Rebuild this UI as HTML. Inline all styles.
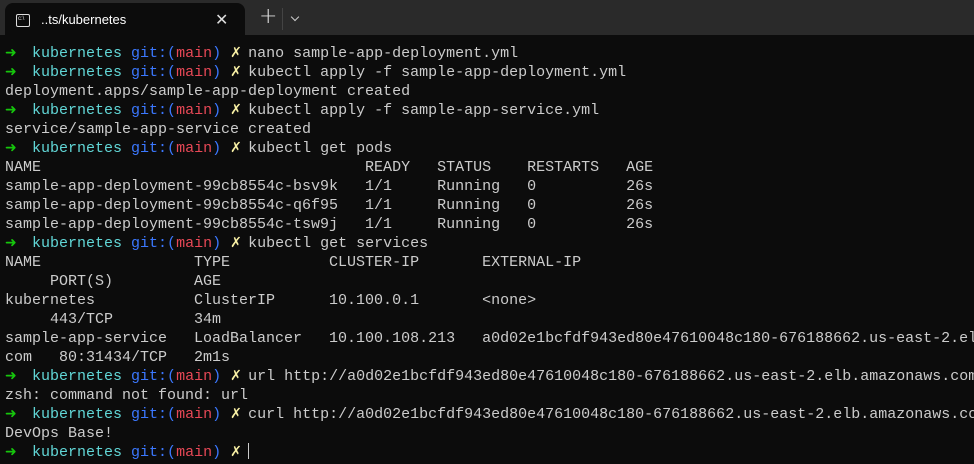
<!DOCTYPE html>
<html><head><meta charset="utf-8"><style>
html,body{margin:0;padding:0;width:974px;height:464px;overflow:hidden;background:#0c0c0c;}
.bar{position:absolute;left:0;top:0;width:974px;height:35px;background:#2a2a2a;}
.tab{position:absolute;left:5px;top:3px;width:240px;height:32px;background:#0c0c0c;border-radius:8px 8px 0 0;}
.tab .t{position:absolute;left:36px;top:9px;font:13px "Liberation Sans",sans-serif;color:#fff;}
.ico{position:absolute;left:11px;top:11px;width:12px;height:11px;border:1.5px solid #ddd;border-radius:2px;}
.ico:after{content:"c:\\";position:absolute;left:1px;top:1px;font:6px "Liberation Sans",sans-serif;color:#ddd;}
.x{position:absolute;left:210px;top:7px;font:16px "DejaVu Sans",sans-serif;color:#ddd;}
.plus{position:absolute;left:259px;top:4px;font:22px "DejaVu Sans",sans-serif;font-weight:200;color:#ddd;}
.sep{position:absolute;left:282px;top:8px;width:1px;height:22px;background:#444;}
.chev{position:absolute;left:292px;top:14px;width:5px;height:5px;border-right:1.5px solid #ccc;border-bottom:1.5px solid #ccc;transform:rotate(45deg);}
pre{position:absolute;left:5px;top:44px;margin:0;font:15px/19px "Liberation Mono","DejaVu Sans Mono",monospace;color:#cccccc;white-space:pre;width:969px;overflow:hidden;}
.g,.y{display:inline-block;width:9px;overflow:visible;line-height:10px;font-family:"DejaVu Sans",sans-serif;}
.g{color:#16c60c;font-weight:bold;font-size:14px;}
.c{color:#61d6d6}.b{color:#3b78ff}.r{color:#e74856}
.y{color:#f9f1a5;font-size:14px}
.cur{display:inline-block;width:1px;height:16px;background:#ccc;vertical-align:-3px;}
</style></head><body>
<div class="bar"><div class="tab"><div class="ico"></div><div class="t">..ts/kubernetes</div><div class="x">✕</div></div>
<div class="plus">+</div><div class="sep"></div><div class="chev"></div></div>
<pre><span class="g">➜</span>  <span class="c">kubernetes</span> <span class="b">git:(</span><span class="r">main</span><span class="b">)</span> <span class="y">✗</span> nano sample-app-deployment.yml
<span class="g">➜</span>  <span class="c">kubernetes</span> <span class="b">git:(</span><span class="r">main</span><span class="b">)</span> <span class="y">✗</span> kubectl apply -f sample-app-deployment.yml
deployment.apps/sample-app-deployment created
<span class="g">➜</span>  <span class="c">kubernetes</span> <span class="b">git:(</span><span class="r">main</span><span class="b">)</span> <span class="y">✗</span> kubectl apply -f sample-app-service.yml
service/sample-app-service created
<span class="g">➜</span>  <span class="c">kubernetes</span> <span class="b">git:(</span><span class="r">main</span><span class="b">)</span> <span class="y">✗</span> kubectl get pods
NAME                                    READY   STATUS    RESTARTS   AGE
sample-app-deployment-99cb8554c-bsv9k   1/1     Running   0          26s
sample-app-deployment-99cb8554c-q6f95   1/1     Running   0          26s
sample-app-deployment-99cb8554c-tsw9j   1/1     Running   0          26s
<span class="g">➜</span>  <span class="c">kubernetes</span> <span class="b">git:(</span><span class="r">main</span><span class="b">)</span> <span class="y">✗</span> kubectl get services
NAME                 TYPE           CLUSTER-IP       EXTERNAL-IP
     PORT(S)         AGE
kubernetes           ClusterIP      10.100.0.1       &lt;none&gt;
     443/TCP         34m
sample-app-service   LoadBalancer   10.100.108.213   a0d02e1bcfdf943ed80e47610048c180-676188662.us-east-2.elb.amazonaws.
com   80:31434/TCP   2m1s
<span class="g">➜</span>  <span class="c">kubernetes</span> <span class="b">git:(</span><span class="r">main</span><span class="b">)</span> <span class="y">✗</span> url http://a0d02e1bcfdf943ed80e47610048c180-676188662.us-east-2.elb.amazonaws.com
zsh: command not found: url
<span class="g">➜</span>  <span class="c">kubernetes</span> <span class="b">git:(</span><span class="r">main</span><span class="b">)</span> <span class="y">✗</span> curl http://a0d02e1bcfdf943ed80e47610048c180-676188662.us-east-2.elb.amazonaws.com
DevOps Base!
<span class="g">➜</span>  <span class="c">kubernetes</span> <span class="b">git:(</span><span class="r">main</span><span class="b">)</span> <span class="y">✗</span> <span class="cur"></span></pre>
</body></html>
